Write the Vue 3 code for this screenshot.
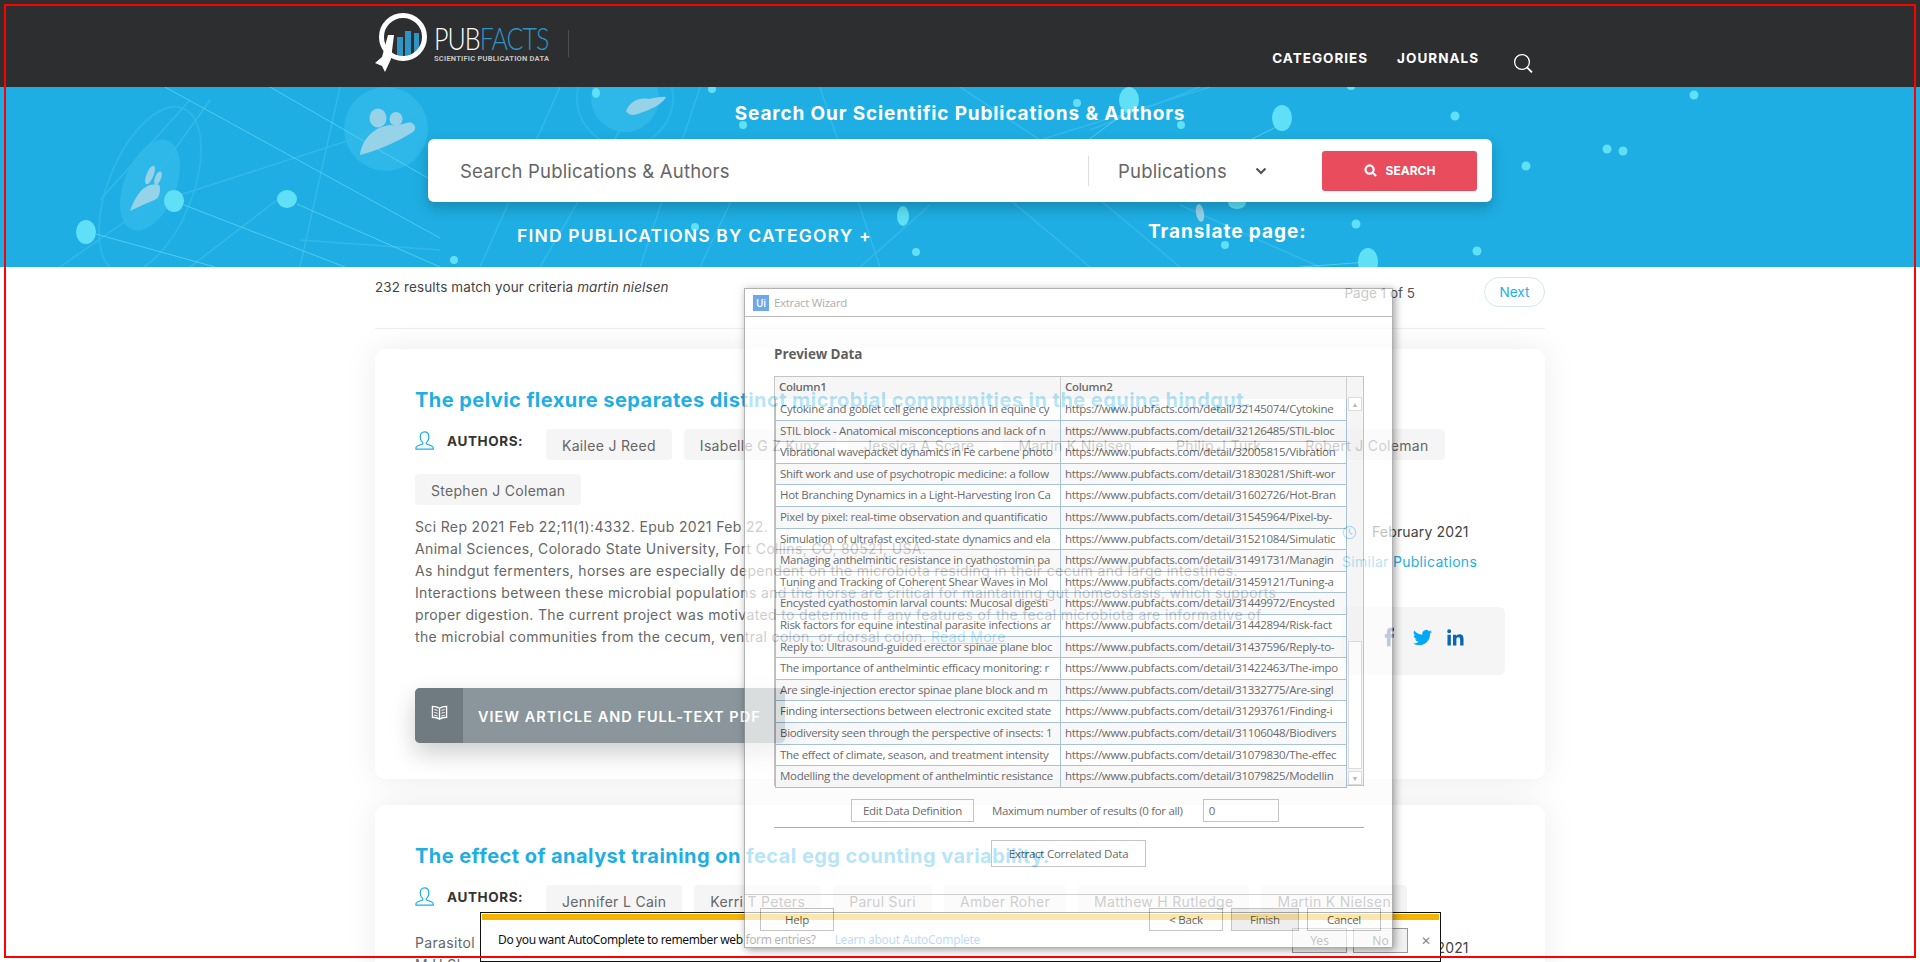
<script setup>
// search results page with the wizard window and the browser's autocomplete bar on top
const dots = [
  [86, 232, 10, 12], [174, 201, 10, 11], [287, 199, 10, 9], [596, 93, 4, 5], [743, 125, 4, 4], [712, 89, 4, 4],
  [903, 216, 6, 10], [695, 227, 4, 4], [916, 252, 4, 4], [454, 260, 4, 4], [1129, 100, 10, 13], [1077, 103, 4, 4],
  [1181, 125, 4, 4], [1282, 118, 10, 13], [1455, 116, 4.5, 4.5], [1526, 166, 4.5, 4.5], [1607, 149, 4.5, 4.5],
  [1623, 151, 4.5, 4.5], [1694, 95, 4.5, 4.5], [1356, 224, 4.5, 4.5], [1477, 251, 4.5, 4.5], [1368, 262, 10, 14],
  [1225, 245, 4, 4], [1237, 203, 9, 6], [1351, 87, 4, 3],
]
const brightLines = [
  [96, 234, 215, 267], [184, 205, 345, 267], [297, 204, 440, 267], [165, 87, 440, 238], [270, 87, 440, 185],
  [1282, 124, 1190, 170], [1129, 110, 1020, 190], [1368, 262, 1300, 267],
]
const softLines = [
  [60, 267, 170, 190], [180, 195, 350, 140], [350, 140, 420, 110], [290, 190, 190, 267], [300, 240, 440, 250],
  [340, 87, 300, 267], [560, 87, 480, 267], [620, 130, 540, 267], [700, 87, 640, 267], [760, 140, 700, 267],
  [820, 87, 880, 267], [930, 205, 860, 267], [1010, 200, 1090, 267], [1100, 200, 1180, 267], [960, 87, 1040, 140],
  [1040, 140, 1210, 87], [1180, 205, 1320, 267], [1090, 130, 1200, 87], [190, 100, 100, 200], [210, 100, 160, 170],
]

const papers = [
  {
    title: 'The pelvic flexure separates distinct microbial communities in the equine hindgut.',
    authors: ['Kailee J Reed', 'Isabelle G Z Kunz', 'Jessica A Scare', 'Martin K Nielsen', 'Philip J Turk', 'Robert J Coleman', 'Stephen J Coleman'],
    date: 'February 2021',
    lines: [
      'Sci Rep 2021 Feb 22;11(1):4332. Epub 2021 Feb 22.',
      'Animal Sciences, Colorado State University, Fort Collins, CO, 80521, USA.',
      'As hindgut fermenters, horses are especially dependent on the microbiota residing in their cecum and large intestines.',
      'Interactions between these microbial populations and the horse are critical for maintaining gut homeostasis, which supports',
      'proper digestion. The current project was motivated to determine if any features of the fecal microbiota are informative of',
      'the microbial communities from the cecum, ventral colon, or dorsal colon.',
    ],
    more: true,
  },
  {
    title: 'The effect of analyst training on fecal egg counting variability.',
    authors: ['Jennifer L Cain', 'Kerri T Peters', 'Parul Suri', 'Amber Roher', 'Matthew H Rutledge', 'Martin K Nielsen'],
    date: 'February 2021',
    lines: ['Parasitol Res 2021 Jan', 'M H Sh'],
    more: false,
  },
]

const rows = [
  ['Cytokine and goblet cell gene expression in equine cy', 'https://www.pubfacts.com/detail/32145074/Cytokine'],
  ['STIL block - Anatomical misconceptions and lack of n', 'https://www.pubfacts.com/detail/32126485/STIL-bloc'],
  ['Vibrational wavepacket dynamics in Fe carbene photo', 'https://www.pubfacts.com/detail/32005815/Vibration'],
  ['Shift work and use of psychotropic medicine: a follow', 'https://www.pubfacts.com/detail/31830281/Shift-wor'],
  ['Hot Branching Dynamics in a Light-Harvesting Iron Ca', 'https://www.pubfacts.com/detail/31602726/Hot-Bran'],
  ['Pixel by pixel: real-time observation and quantificatio', 'https://www.pubfacts.com/detail/31545964/Pixel-by-'],
  ['Simulation of ultrafast excited-state dynamics and ela', 'https://www.pubfacts.com/detail/31521084/Simulatic'],
  ['Managing anthelmintic resistance in cyathostomin pa', 'https://www.pubfacts.com/detail/31491731/Managin'],
  ['Tuning and Tracking of Coherent Shear Waves in Mol', 'https://www.pubfacts.com/detail/31459121/Tuning-a'],
  ['Encysted cyathostomin larval counts: Mucosal digesti', 'https://www.pubfacts.com/detail/31449972/Encysted'],
  ['Risk factors for equine intestinal parasite infections ar', 'https://www.pubfacts.com/detail/31442894/Risk-fact'],
  ['Reply to: Ultrasound-guided erector spinae plane bloc', 'https://www.pubfacts.com/detail/31437596/Reply-to-'],
  ['The importance of anthelmintic efficacy monitoring: r', 'https://www.pubfacts.com/detail/31422463/The-impo'],
  ['Are single-injection erector spinae plane block and m', 'https://www.pubfacts.com/detail/31332775/Are-singl'],
  ['Finding intersections between electronic excited state', 'https://www.pubfacts.com/detail/31293761/Finding-i'],
  ['Biodiversity seen through the perspective of insects: 1', 'https://www.pubfacts.com/detail/31106048/Biodivers'],
  ['The effect of climate, season, and treatment intensity', 'https://www.pubfacts.com/detail/31079830/The-effec'],
  ['Modelling the development of anthelmintic resistance', 'https://www.pubfacts.com/detail/31079825/Modellin'],
]
</script>

<template>
  <div class="page">
    <header class="topbar">
      <div class="wrap topbar-in">
        <div class="logo">
          <svg class="logo-mark" viewBox="0 0 56 64" width="56" height="64">
            <defs><clipPath id="lens"><circle cx="28" cy="27" r="21" /></clipPath></defs>
            <g clip-path="url(#lens)" fill="#2f93c4">
              <rect x="22" y="27" width="6" height="24" />
              <rect x="30" y="21" width="6" height="30" />
              <rect x="39" y="23" width="5" height="28" />
            </g>
            <circle cx="28" cy="27" r="21.5" fill="none" stroke="#fff" stroke-width="5" />
            <polygon points="13,25 19,25 16,49 10,62 7,56 0,53 7,47" fill="#fff" />
          </svg>
          <div class="logo-text">
            <div class="logo-name">PUB<span>FACTS</span></div>
            <div class="logo-sub">SCIENTIFIC PUBLICATION DATA</div>
          </div>
          <i class="logo-rule"></i>
        </div>
        <nav class="nav">
          <a>CATEGORIES</a>
          <a>JOURNALS</a>
          <svg viewBox="0 0 20 20" width="20" height="20" fill="none" stroke="#fff">
            <circle cx="9" cy="9" r="7.4" stroke-width="1.3" />
            <path d="M14 14.4l5 5" stroke-width="1.8" />
          </svg>
        </nav>
      </div>
    </header>

    <section class="hero">
      <svg class="hero-art" viewBox="0 87 1920 180" width="1920" height="180">
        <g fill="#2db8e9">
          <circle cx="386" cy="129" r="42" />
          <ellipse cx="150" cy="185" rx="26" ry="48" transform="rotate(22 150 185)" />
          <circle cx="625" cy="98" r="34" />
        </g>
        <g fill="none" stroke="#2cb7e8" stroke-width="2">
          <ellipse cx="150" cy="190" rx="42" ry="88" transform="rotate(22 150 190)" />
          <circle cx="625" cy="98" r="48" />
        </g>
        <g stroke="#34b9e9" stroke-width="1.5">
          <line v-for="(l, i) in softLines" :key="i" :x1="l[0]" :y1="l[1]" :x2="l[2]" :y2="l[3]" />
        </g>
        <g stroke="#5dd3f3" stroke-width="1" opacity=".8">
          <line v-for="(l, i) in brightLines" :key="i" :x1="l[0]" :y1="l[1]" :x2="l[2]" :y2="l[3]" />
        </g>
        <g fill="#96d2e8">
          <ellipse cx="378" cy="118" rx="8.5" ry="9.5" />
          <ellipse cx="396" cy="119" rx="6.5" ry="7" />
          <path d="M360 155c2-16 14-28 30-30 8 2 18-4 22-2s4 7 1 9c-12 8-34 18-53 23z" />
          <ellipse cx="150" cy="175" rx="3.5" ry="10" transform="rotate(22 150 175)" />
          <ellipse cx="158" cy="178" rx="3" ry="7" transform="rotate(22 158 178)" />
          <path d="M130 211c5-14 11-23 20-26 6 0 10-3 10 4s-2 10-8 12c-8 3-15 7-22 10z" />
          <path d="M626 111c4-10 14-14 22-12 8-1 14-3 18-2-2 5-10 10-20 14-8 2-14 8-20 0z" />
          <ellipse cx="1200" cy="213" rx="4" ry="9" transform="rotate(-10 1200 213)" />
        </g>
        <g fill="#5fe0f6">
          <ellipse v-for="(d, i) in dots" :key="i" :cx="d[0]" :cy="d[1]" :rx="d[2]" :ry="d[3]" />
        </g>
      </svg>
      <h1 class="hero-title">Search Our Scientific Publications &amp; Authors</h1>
      <div class="searchbox">
        <div class="search-input">Search Publications &amp; Authors</div>
        <div class="search-type">
          <span>Publications</span>
          <svg viewBox="0 0 12 8" width="12" height="8" fill="none" stroke="#555" stroke-width="2.2"><path d="M1.5 1.5L6 6l4.5-4.5" /></svg>
        </div>
        <button class="search-btn">
          <svg viewBox="0 0 14 14" width="13" height="13" fill="none" stroke="#fff" stroke-width="2.4">
            <circle cx="6" cy="6" r="4.4" /><path d="M9.2 9.2L13 13" />
          </svg>
          SEARCH
        </button>
      </div>
      <div class="hero-links">
        <span class="find-cat">FIND PUBLICATIONS BY CATEGORY +</span>
        <span class="translate">Translate page:</span>
      </div>
    </section>

    <main class="wrap">
      <div class="results-row">
        <p class="count">232 results match your criteria <em>martin nielsen</em></p>
        <span class="pageno">Page 1 of 5</span>
        <a class="next">Next</a>
      </div>

      <article v-for="p in papers" :key="p.title" class="card">
        <h2 class="card-title">{{ p.title }}</h2>
        <div class="authors">
          <span class="authors-label">
            <svg viewBox="0 0 20 20" width="19" height="19" fill="none" stroke="#1eaee3" stroke-width="1.3">
              <path d="M10 1c3 0 4.6 2.2 4.6 5.2 0 2.8-1.4 5-2.5 6-.4.5-.2 1.400.6 1.700 2.600 1 6.500 1.700 6.500 3.900v1.200H1v-1.200c0-2.200 3.900-2.900 6.500-3.900.8-.3 1-1.200.6-1.700-1.100-1-2.600-3.200-2.600-6C5.500 3.200 7 1 10 1z" />
            </svg>
            <b>AUTHORS:</b>
          </span>
          <span v-for="a in p.authors" :key="a" class="chip">{{ a }}</span>
        </div>
        <div class="card-lower">
          <div class="abstract-col">
            <p class="abstract">
              <template v-for="(l, i) in p.lines" :key="i">{{ l }}<br v-if="i < p.lines.length - 1" /></template>
              <template v-if="p.more"> <a class="more">Read More</a></template>
            </p>
            <a v-if="p.more" class="view-btn">
              <span class="view-ico">
                <svg viewBox="0 0 18 18" width="17" height="17" fill="none" stroke="#fff" stroke-width="1.4">
                  <path d="M9 4.500C7 3 4 2.500 1.500 2.500v11.500c2.500 0 5.500.5 7.500 2 2-1.500 5-2 7.500-2V2.500C14 2.500 11 3 9 4.500zM9 4.500V16" />
                  <path d="M3.500 6c1 0 2 .2 3.500 .8M3.500 9c1 0 2 .2 3.500 .8M3.500 12c1 0 2 .2 3.500 .8M14.500 6c-1 0-2 .2-3.500 .8M14.500 9c-1 0-2 .2-3.500 .8M14.500 12c-1 0-2 .2-3.500 .8" stroke-width="1" />
                </svg>
              </span>
              <span class="view-text">VIEW ARTICLE AND FULL-TEXT PDF</span>
            </a>
          </div>
          <aside class="side">
            <div class="side-date">
              <svg viewBox="0 0 16 16" width="15" height="15" fill="none" stroke="#1eaee3" stroke-width="1.4">
                <circle cx="8" cy="8" r="6.600" /><path d="M8 3.800V8l3 2" />
              </svg>
              <span>{{ p.date }}</span>
            </div>
            <a class="similar">Similar Publications</a>
            <div class="share">
              <svg viewBox="0 0 24 24" width="20" height="20" fill="#3b5998"><path d="M14 8.500V6.300c0-1 .7-1.300 1.200-1.300H18V1h-3.900C10.600 1 9.500 3.600 9.500 5.600v2.900H7V13h2.500v10H14V13h3.400l.5-4.500H14z" /></svg>
              <svg viewBox="0 0 24 24" width="19" height="19" fill="#03a9f4"><path d="M23.950 4.570a10 10 0 01-2.830.98 4.960 4.960 0 002.160-2.720c-.95.55-2 .96-3.130 1.190a4.920 4.920 0 00-8.380 4.480A13.980 13.980 0 011.640 3.160a4.920 4.920 0 001.520 6.570 4.900 4.900 0 01-2.230-.62v.06a4.920 4.920 0 003.950 4.830 5 5 0 01-2.210.08 4.940 4.940 0 004.600 3.420A9.870 9.870 0 010 19.540a13.940 13.940 0 007.550 2.210c9.050 0 14-7.500 14-13.980 0-.21 0-.42-.02-.63a9.940 9.940 0 002.460-2.550z" /></svg>
              <svg viewBox="2 2 20 20" width="19" height="19" fill="#0a66b0"><path d="M20.450 20.450h-3.550v-5.570c0-1.330-.03-3.040-1.850-3.040-1.850 0-2.140 1.450-2.140 2.940v5.670H9.350V9h3.410v1.560h.05c.48-.9 1.640-1.850 3.370-1.850 3.600 0 4.270 2.370 4.270 5.460v6.280zM5.340 7.430a2.060 2.060 0 110-4.130 2.060 2.060 0 010 4.130zM7.120 20.450H3.560V9h3.560v11.450z" /></svg>
            </div>
          </aside>
        </div>
      </article>
    </main>

    <!-- browser autocomplete bar -->
    <div class="ac-bar">
      <div class="ac-strip"></div>
      <div class="ac-row">
        <span class="ac-msg">Do you want AutoComplete to remember web form entries?</span>
        <a class="ac-link">Learn about AutoComplete</a>
        <button class="ac-btn ac-yes">Yes</button>
        <button class="ac-btn">No</button>
        <span class="ac-close">✕</span>
      </div>
    </div>

    <!-- Extract Wizard window, half see-through -->
    <div class="wizard">
      <div class="wiz-bar">
        <span class="wiz-ui">Ui</span>
        <span class="wiz-name">Extract Wizard</span>
      </div>
      <div class="wiz-body">
        <h3 class="wiz-h">Preview Data</h3>
        <div class="grid-box">
          <div class="grid">
            <div class="grid-head"><span>Column1</span><span>Column2</span></div>
            <div v-for="(r, i) in rows" :key="i" class="grid-row" :class="{ alt: i % 2 }">
              <span>{{ r[0] }}</span><span>{{ r[1] }}</span>
            </div>
          </div>
          <div class="scroll">
            <i class="scroll-btn">▲</i>
            <i class="scroll-thumb"></i>
            <i class="scroll-btn">▼</i>
          </div>
        </div>
        <div class="wiz-opts">
          <button class="wbtn wbtn-edit">Edit Data Definition</button>
          <label>Maximum number of results (0 for all)</label>
          <div class="wiz-input">0</div>
        </div>
        <hr class="wiz-rule" />
        <button class="wbtn wbtn-extract">Extract Correlated Data</button>
      </div>
      <div class="wiz-foot">
        <button class="wbtn wbtn-help">Help</button>
        <button class="wbtn wbtn-back">&lt; Back</button>
        <button class="wbtn wbtn-finish">Finish</button>
        <button class="wbtn wbtn-cancel">Cancel</button>
      </div>
    </div>

    <div class="frame"></div>
  </div>
</template>

<style>
html, body { margin: 0; overflow: hidden; background: #fff; }
</style>

<style scoped>
.page {
  position: relative; height: 962px; overflow: hidden; background: #fff;
  font-family: Inter, "Liberation Sans", sans-serif; color: #444;
}
.wrap { width: 1170px; margin: 0 auto; }
p, h1, h2, h3 { margin: 0; }

/* top bar */
.topbar { height: 87px; background: #2d2e30; }
.topbar-in { display: flex; height: 87px; }
.logo { display: flex; align-items: flex-start; padding-top: 10px; }
.logo-text { width: 115px; margin: 12px 0 0 3px; }
.logo-name { font: 300 31px/32px Lato, sans-serif; color: #fff; letter-spacing: -1.2px; white-space: nowrap; transform: scaleX(.81); transform-origin: left center; }
.logo-name span { color: #2f93c4; }
.logo-sub { font: 700 7.500px/9px Roboto, sans-serif; color: #c4c4c4; letter-spacing: .22px; white-space: nowrap; }
.logo-rule { width: 1px; height: 27px; background: #4d4e50; margin: 20px 0 0 19px; }
.nav { margin-left: auto; display: flex; align-items: flex-start; padding-top: 50px; padding-right: 12px; }
.nav a { font-size: 13.500px; font-weight: 700; line-height: 17px; color: #fff; margin-right: 29px; letter-spacing: 1px; }
.nav svg { margin-top: 3px; margin-left: 5px; }

/* hero */
.hero { position: relative; height: 180px; background: #1eaee3; overflow: hidden; display: flex; flex-direction: column; align-items: center; }
.hero-art { position: absolute; left: 0; top: 0; }
.hero-title { position: relative; font-size: 19px; font-weight: 700; line-height: 24px; color: #fff; margin-top: 15px; letter-spacing: .86px; }
.searchbox {
  position: relative; width: 1064px; height: 63px; margin-top: 13px; box-sizing: border-box;
  background: #fff; border-radius: 6px; box-shadow: 0 6px 14px rgba(0,0,0,.22);
  display: flex; align-items: center; padding-right: 14px;
}
.search-input { flex: 0 0 660px; padding-left: 32px; box-sizing: border-box; font-size: 18.500px; color: #666; letter-spacing: .2px; }
.search-type {
  width: 234px; height: 30px; box-sizing: border-box; border-left: 1px solid #ddd; padding-left: 29px;
  display: flex; align-items: center; gap: 28px; font-size: 18.500px; color: #666; letter-spacing: .2px;
}
.search-btn {
  flex: 0 0 155px; height: 40px; border: 0; border-radius: 3px; background: #e94c5d; color: #fff;
  font: 700 12px Inter, sans-serif; display: flex; align-items: center; justify-content: center; gap: 9px;
}
.hero-links { position: relative; width: 100%; height: 50px; display: flex; align-items: flex-start; }
.find-cat { flex: 0 0 631px; margin: 23px 0 0 517px; font-size: 17.500px; font-weight: 600; line-height: 22px; color: #fff; white-space: nowrap; letter-spacing: 1.16px; }
.translate { margin-top: 18px; font-size: 19px; font-weight: 700; line-height: 24px; color: #fff; letter-spacing: .95px; white-space: nowrap; }

/* results */
.results-row { height: 61px; display: flex; align-items: flex-start; border-bottom: 1px solid #eee; }
.count { margin-top: 11px; font-size: 13.500px; line-height: 18px; color: #444; letter-spacing: .1px; }
.count em { font-style: italic; }
.pageno { margin: 17px 0 0 auto; font-size: 13.500px; line-height: 18px; color: #555; }
.next {
  margin: 10px 0 0 69px; width: 61px; height: 30px; box-sizing: border-box; border: 1px solid #d5e6ec; border-radius: 15px;
  text-align: center; font-size: 13.500px; line-height: 28px; color: #1eaee3;
}

/* cards */
.card {
  margin-top: 20px; background: #fff; border-radius: 10px; padding: 39px 40px 36px; margin-bottom: 26px;
  box-shadow: 0 0 32px rgba(0,0,0,.08);
}
.card + .card { margin-top: 0; }
.card + .card .abstract { margin-top: 16px; }
.card + .card .side { padding-top: 21px; }
.card-title { font-size: 20px; font-weight: 700; line-height: 24px; color: #1eaee3; white-space: nowrap; letter-spacing: .45px; }
.authors { display: flex; flex-wrap: wrap; gap: 14px 12px; margin-top: 17px; }
.authors-label { display: flex; align-items: flex-start; gap: 13px; width: 119px; padding-top: 3px; }
.authors-label svg { margin-top: -1px; }
.authors-label b { font-size: 13.500px; line-height: 18px; font-weight: 700; color: #333; letter-spacing: .6px; }
.chip {
  height: 31px; padding: 0 16px; background: #f5f5f5; border-radius: 4px;
  font-size: 14px; line-height: 33px; color: #666; white-space: nowrap; letter-spacing: .3px;
}
.card-lower { display: flex; justify-content: space-between; }
.abstract { margin-top: 11px; font-size: 14px; line-height: 22px; color: #666; white-space: nowrap; letter-spacing: .35px; }
.more { margin-left: 4px; color: #1eaee3; text-decoration: underline; }
.view-btn {
  display: flex; width: 370px; height: 55px; margin-top: 40px; border-radius: 5px; overflow: hidden;
  background: #8a969b; box-shadow: 0 10px 24px rgba(0,0,0,.2); color: #fff;
}
.view-ico { flex: 0 0 48px; background: #6f7b80; display: flex; align-items: center; justify-content: center; padding-bottom: 7px; box-sizing: border-box; }
.view-text { padding-left: 15px; font-size: 14.500px; font-weight: 600; line-height: 57px; white-space: nowrap; letter-spacing: 1px; }
.side { flex: 0 0 163px; padding-top: 16px; }
.side-date { display: flex; align-items: center; gap: 15px; font-size: 14px; line-height: 22px; color: #444; white-space: nowrap; letter-spacing: .15px; }
.similar { display: block; margin-top: 8px; font-size: 14px; line-height: 22px; color: #1eaee3; white-space: nowrap; letter-spacing: .3px; }
.share {
  margin-top: 34px; height: 68px; background: #f5f5f5; border-radius: 6px;
  display: flex; align-items: center; padding: 0 0 8px 37px; gap: 14px; box-sizing: border-box;
}

/* autocomplete bar */
.ac-bar {
  position: absolute; left: 480px; top: 912px; width: 961px; height: 50px; box-sizing: border-box;
  background: #fff; border: 1px solid #111; font-family: "Noto Sans", sans-serif; z-index: 5;
}
.ac-strip { height: 6px; margin: 1px 1px 0; background: #f4b400; }
.ac-row { display: flex; align-items: flex-start; height: 36px; }
.ac-msg { margin: 12px 0 0 17px; font-size: 12px; line-height: 16px; color: #111; letter-spacing: -.37px; white-space: nowrap; }
.ac-link { margin: 12px 0 0 19px; font-size: 12px; line-height: 16px; color: #3a8ee6; letter-spacing: -.3px; white-space: nowrap; }
.ac-btn {
  width: 55px; height: 25px; margin: 8px 6px 0 0; border: 1px solid #999; background: #f2f2f2;
  font: 12px "Noto Sans", sans-serif; color: #444; padding: 0;
}
.ac-yes { margin-left: 312px; }
.ac-close { margin: 13px 0 0 7px; font-size: 12px; line-height: 16px; color: #888; font-weight: 700; font-family: "DejaVu Sans", sans-serif; }

/* wizard window */
.wizard {
  position: absolute; left: 744px; top: 288px; width: 649px; height: 660px; box-sizing: border-box; z-index: 6;
  background: #fff; border: 1px solid #8f8f8f; opacity: .68; box-shadow: 2px 2px 8px rgba(0,0,0,.55);
  display: flex; flex-direction: column; font-family: "Open Sans", sans-serif; color: #222;
}
.wiz-bar { height: 28px; flex: none; box-sizing: border-box; border-bottom: 1px solid #999; display: flex; align-items: center; padding-left: 8px; gap: 5px; }
.wiz-ui { width: 16px; height: 16px; background: #2b7fe0; color: #fff; font-size: 10px; font-weight: 600; line-height: 16px; text-align: center; }
.wiz-name { font-size: 11.500px; color: #888; letter-spacing: -.3px; }
.wiz-body { flex: 1; padding: 0 29px 0 29px; min-height: 0; }
.wiz-h { margin: 27px 0 0; font-size: 13.500px; font-weight: 700; line-height: 20px; color: #111; letter-spacing: -.1px; }
.grid-box { display: flex; width: 590px; margin-top: 12px; height: 410px; box-sizing: border-box; border: 1px solid #aaa; background: #f1f1f1; }
.grid { flex: 0 0 572px; min-width: 0; }
.grid-head, .grid-row { display: grid; grid-template-columns: 286px 286px; }
.grid-head { height: 22px; background: #f3f3f3; font-weight: 600; }
.grid-head span, .grid-row span {
  overflow: hidden; white-space: nowrap; padding: 0 4px; box-sizing: border-box;
  font-size: 11.500px; line-height: 20px; letter-spacing: -.3px; border-right: 1px solid #b9b9b9;
}
.grid-row { height: 21.600px; background: #fff; }
.grid-row.alt { background: #f5f5f5; }
.grid-row span { border: 1px solid #7ea6c8; border-width: 0 1px 1px 0; line-height: 20.600px; }
.grid-row span:first-child { border-left-width: 1px; }
.scroll { flex: 1; display: flex; flex-direction: column; padding-top: 20px; align-items: center; }
.scroll-btn { display: block; width: 14px; height: 14px; font-style: normal; font-size: 7px; line-height: 14px; text-align: center; color: #999; border: 1px solid #ccc; background: #fff; box-sizing: border-box; }
.scroll-thumb { display: block; width: 14px; height: 128px; margin: auto 0 2px; background: #fff; border: 1px solid #ccc; box-sizing: border-box; }
.wiz-opts { display: flex; align-items: center; margin-top: 13px; font-size: 11.500px; letter-spacing: -.33px; }
.wiz-opts label { margin-left: 18px; }
.wiz-input { width: 76px; height: 23px; margin-left: 20px; box-sizing: border-box; border: 1px solid #aaa; padding-left: 5px; line-height: 21px; }
.wbtn { height: 23px; background: #fff; border: 1px solid #aaa; padding: 0; font: 11.500px "Open Sans", sans-serif; letter-spacing: -.25px; color: #222; }
.wbtn-edit { width: 123px; margin-left: 77px; }
.wiz-rule { width: 590px; margin: 5px 0 0; border: 0; border-top: 1px solid #888; }
.wbtn-extract { display: block; width: 155px; height: 27px; margin: 12px 0 0 217px; }
.wiz-foot { flex: none; height: 53px; box-sizing: border-box; border-top: 1px solid #bbb; display: flex; padding: 13px 11px 0 15px; gap: 8px; }
.wbtn-help { width: 74px; margin-right: auto; }
.wbtn-back { width: 74px; }
.wbtn-finish { width: 68px; background: #e6e6e6; }
.wbtn-cancel { width: 74px; }

.frame {
  position: absolute; left: 4px; top: 4px; width: 1912px; height: 954px; box-sizing: border-box;
  border: 2px solid #f00; pointer-events: none; z-index: 7;
}
</style>
